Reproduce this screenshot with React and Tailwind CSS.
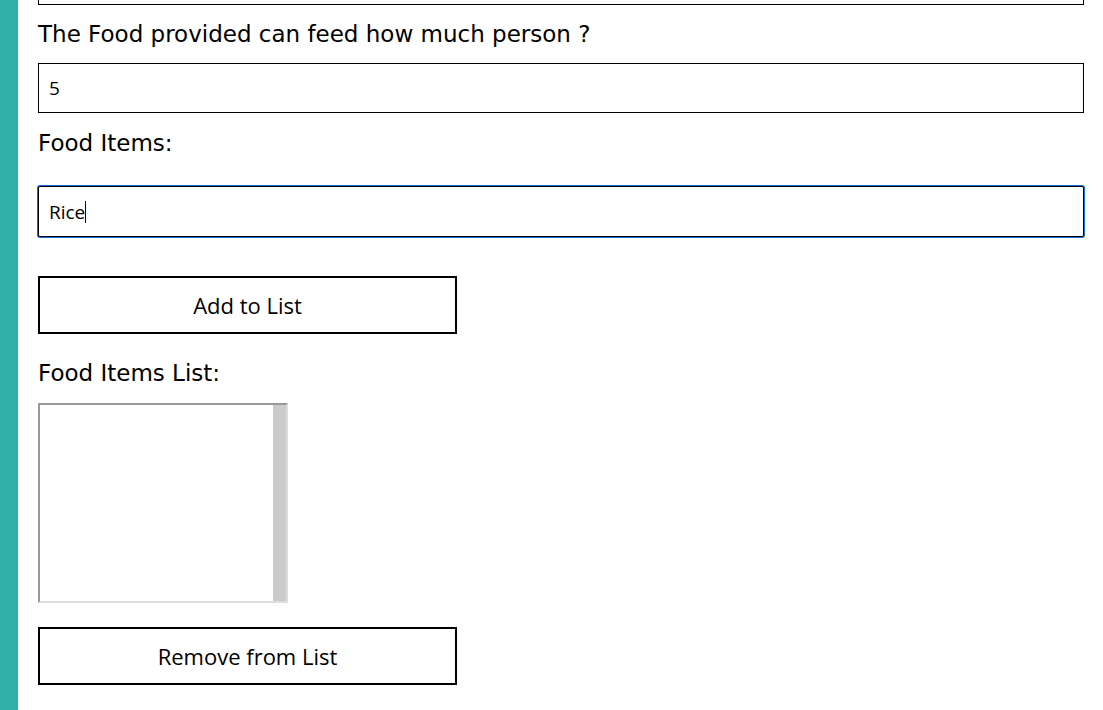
export default function App() {
  const label = "block text-[23px] leading-[27px] text-black [font-family:'DejaVu_Sans',sans-serif]";
  const inputCls =
    "block w-[1046px] h-[50px] border border-black bg-white pl-[10px] text-[19px] text-black [font-family:'Open_Sans',sans-serif] outline-none";
  const btn =
    "block w-[419px] h-[58px] border-2 border-black bg-white text-[22px] text-black [font-family:'Open_Sans',sans-serif]";
  return (
    <div className="flex w-[1103px] h-[710px] overflow-hidden bg-white">
      <div className="w-[18px] shrink-0 bg-[#2fb0a8]" />
      <div className="pl-[20px] flex flex-col">
        <input className={inputCls + " mt-[-45px]"} defaultValue="" readOnly />
        <label className={label + " mt-[16px]"}>The Food provided can feed how much person ?</label>
        <input className={inputCls + " mt-[15px]"} defaultValue="5" readOnly />
        <label className={label + " mt-[17px]"}>Food Items:</label>
        <div className={inputCls + " mt-[29px] h-[51px] rounded-[2px] flex items-center pt-[1px] ring-1 ring-[#1a6fd8]"}>
          <span>Rice</span>
          <span className="inline-block w-[1px] h-[22px] bg-black" />
        </div>
        <button className={btn + " mt-[39px]"}>Add to List</button>
        <label className={label + " mt-[26px]"}>Food Items List:</label>
        <div className="mt-[16px] w-[250px] h-[200px] flex border-2 border-t-[#999] border-l-[#999] border-b-[#ddd] border-r-[#ddd] bg-white">
          <div className="flex-1" />
          <div className="w-[13px] bg-[#cbcbcb]" />
        </div>
        <button className={btn + " mt-[24px]"}>Remove from List</button>
      </div>
    </div>
  );
}
